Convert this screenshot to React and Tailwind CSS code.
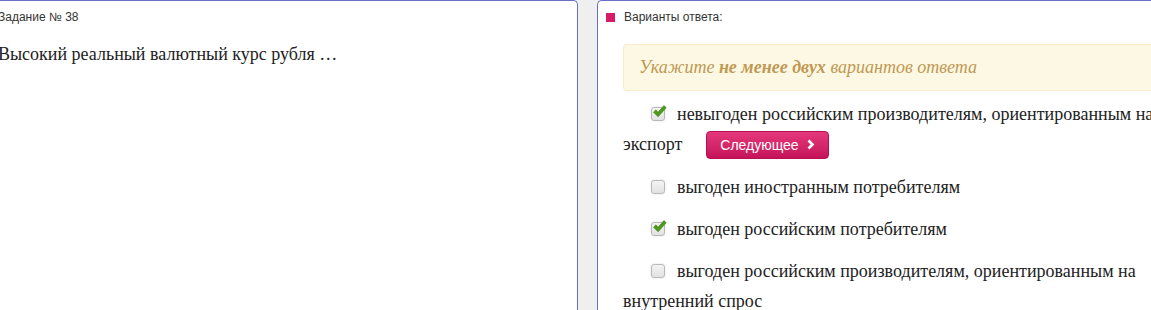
import React from "react";

function Check({ checked }) {
  return (
    <span className="relative inline-block align-middle w-[14px] h-[14px] mr-[12px] -mt-[3px]">
      <span className="absolute inset-0 rounded-[3px] border border-[#b9b9b9] bg-gradient-to-b from-[#f4f4f4] to-[#e2e2e2] shadow-[0_0_2px_rgba(0,0,0,0.15)]" />
      {checked && (
        <svg className="absolute left-[1px] top-[-3px]" width="15" height="15" viewBox="0 0 15 15">
          <path d="M1.5 8.2 L4 5.8 L6 8.3 L12 1.5 L14.2 3.8 L6.1 12.8 Z" fill="#4c9a1a" stroke="#3d7f12" strokeWidth="0.6" strokeLinejoin="round" />
        </svg>
      )}
    </span>
  );
}

export default function App() {
  const serif = { fontFamily: '"Liberation Serif", "Times New Roman", serif' };
  return (
    <div className="w-[1151px] h-[310px] overflow-hidden bg-[#efefef]" style={{ fontFamily: '"Liberation Sans", Arial, sans-serif' }}>
      <div className="flex w-[1240px] h-full">
        <div className="w-[578px] shrink-0 bg-white border-t border-r border-[#6b6ec6] rounded-tr-[5px]">
          <div className="-ml-[2px] pt-[9px] text-[12px] leading-[14px] text-[#333]">Задание № 38</div>
          <div className="-ml-[2px] mt-[19px] text-[18px] leading-[22px] text-[#222]" style={serif}>
            Высокий реальный валютный курс рубля …
          </div>
        </div>
        <div className="w-[19px] shrink-0" />
        <div className="flex-1 bg-white border-t border-l border-[#6b6ec6] rounded-tl-[5px] pl-[25px] pr-[45px]">
          <div className="flex items-center pt-[9px] -ml-[17px]">
            <span className="w-[9px] h-[9px] bg-[#d81b68] mr-[9px]" />
            <span className="text-[12px] leading-[14px] text-[#333]">Варианты ответа:</span>
          </div>
          <div className="mt-[20px] h-[47px] rounded-[4px] border border-[#faebcc] bg-[#fcf8e3] pl-[15px] flex items-center text-[18px] italic text-[#c09853]" style={serif}>
            <span>
              Укажите <b>не менее двух</b> вариантов ответа
            </span>
          </div>
          <div className="mt-[8px] text-[18px] text-[#222]" style={serif}>
            <p className="leading-[30px] indent-[28px]">
              <Check checked />
              невыгоден российским производителям, ориентированным на экспорт
              <button className="ml-[24px] inline-flex items-center align-middle h-[28px] px-[13px] rounded-[4px] border border-[#b5104f] bg-gradient-to-b from-[#e5387c] to-[#c5125a] text-white text-[14px] leading-none -mt-[2px]" style={{ fontFamily: '"Liberation Sans", Arial, sans-serif', textIndent: 0 }}>
                Следующее
                <svg className="ml-[8px]" width="8" height="11" viewBox="0 0 8 11">
                  <path d="M1.5 1.5 L5.5 5.5 L1.5 9.5" fill="none" stroke="white" strokeWidth="2.6" />
                </svg>
              </button>
            </p>
            <p className="mt-[13px] leading-[30px] indent-[28px]">
              <Check />
              выгоден иностранным потребителям
            </p>
            <p className="mt-[12px] leading-[30px] indent-[28px]">
              <Check checked />
              выгоден российским потребителям
            </p>
            <p className="mt-[12px] leading-[30px] indent-[28px]">
              <Check />
              выгоден российским производителям, ориентированным на внутренний спрос
            </p>
          </div>
        </div>
      </div>
    </div>
  );
}
